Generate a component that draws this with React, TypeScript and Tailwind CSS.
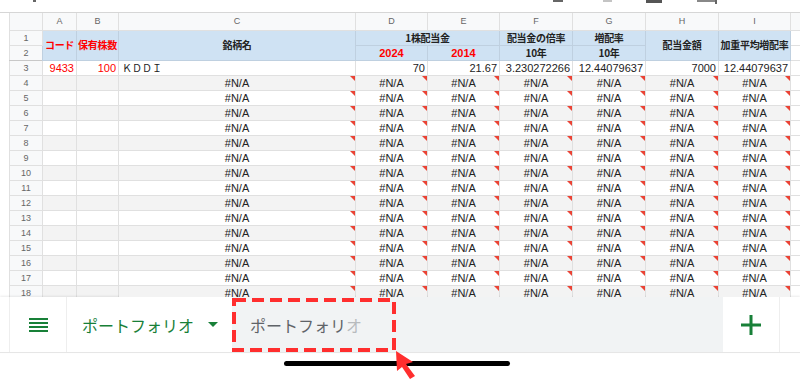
import React from "react";

const FONT = { fontFamily: '"Liberation Sans", Arial, "Noto Sans CJK JP", sans-serif' };
const JP = { fontFamily: '"Noto Sans CJK JP", "Liberation Sans", sans-serif' };

const colWidths = [33, 34, 42, 237, 72, 72, 73, 73, 73, 72, 10];
const letters = ["A", "B", "C", "D", "E", "F", "G", "H", "I", ""];

function Tri() {
  return (
    <span className="absolute right-0 top-0 w-0 h-0 border-l-[5px] border-l-transparent border-t-[5px] border-t-[#ea4335]" />
  );
}

function NaRow({ n }: { n: number }) {
  const gray = n % 2 === 0;
  const bg = gray ? "bg-[#f3f3f3]" : "bg-white";
  return (
    <tr className="h-[15px]">
      <td className="bg-[#f8f9fa] border border-[#e0e0e0] text-center text-[9px] text-[#666] p-0 leading-[14px]">{n}</td>
      <td className={`${bg} border border-[#e0e0e0] p-0`} />
      <td className={`${bg} border border-[#e0e0e0] p-0`} />
      {[0, 1, 2, 3, 4, 5, 6].map((i) => (
        <td key={i} className={`${bg} relative border border-[#e0e0e0] p-0 text-center text-[11px] leading-[14px] text-[#222]`}>
          #N/A
          <Tri />
        </td>
      ))}
      <td className="bg-white border border-[#e0e0e0] p-0" />
    </tr>
  );
}

export default function App() {
  const hdr = "bg-[#cfe2f3] border border-[#bfd0e0] p-0 text-center font-bold leading-[14px] whitespace-nowrap overflow-visible";
  const jp = "text-[10px] tracking-[-0.3px]";
  const red = "text-[#ff0000]";
  return (
    <div className="w-[800px] h-[385px] bg-white overflow-hidden relative" style={FONT}>
      {/* top strip with cut-off toolbar icons */}
      <div className="h-[12px] flex items-start">
        <span className="ml-[33px] w-[3px] h-[2px] bg-[#666]" />
        <span className="ml-[517px] w-[10px] h-[2px] bg-[#666]" />
        <span className="ml-[40px] w-[9px] h-[2px] bg-[#c4c4c4]" />
        <span className="ml-[34px] w-[16px] h-[3px] bg-[#555]" />
        <span className="ml-[35px] w-[18px] h-[2px] bg-[#888]" />
        <span className="w-[2px] h-[4px] bg-[#666]" />
      </div>

      {/* sheet */}
      <div className="h-[285px] overflow-hidden border-t border-[#d6d6d6] pl-[9px]">
        <table className="table-fixed border-collapse w-[791px]">
          <colgroup>
            {colWidths.map((w, i) => (
              <col key={i} style={{ width: w }} />
            ))}
          </colgroup>
          <tbody>
            <tr className="h-[17px]">
              <td className="bg-[#f8f9fa] border border-[#e0e0e0] border-t-0 p-0" />
              {letters.map((l, i) => (
                <td key={i} className="bg-[#f8f9fa] border border-[#e0e0e0] border-t-0 p-0 text-center text-[9px] text-[#666] leading-[16px]">
                  {l}
                </td>
              ))}
            </tr>
            <tr className="h-[15px]">
              <td className="bg-[#f8f9fa] border border-[#e0e0e0] text-center text-[9px] text-[#666] p-0 leading-[14px]">1</td>
              <td rowSpan={2} className={`${hdr} ${jp} ${red}`} style={JP}>コード</td>
              <td rowSpan={2} className={`${hdr} ${jp} ${red}`} style={JP}>保有株数</td>
              <td rowSpan={2} className={`${hdr} ${jp} text-[#222]`} style={JP}>銘柄名</td>
              <td colSpan={2} className={`${hdr} ${jp} text-[#222]`} style={JP}>1株配当金</td>
              <td className={`${hdr} ${jp} text-[#222]`} style={JP}>配当金の倍率</td>
              <td className={`${hdr} ${jp} text-[#222]`} style={JP}>増配率</td>
              <td rowSpan={2} className={`${hdr} ${jp} text-[#222]`} style={JP}>配当金額</td>
              <td rowSpan={2} className={`${hdr} ${jp} text-[#222]`} style={JP}>加重平均増配率</td>
              <td className="bg-white border border-[#e0e0e0] p-0" />
            </tr>
            <tr className="h-[15px]">
              <td className="bg-[#f8f9fa] border border-[#e0e0e0] border-b-[#c8c8c8] text-center text-[9px] text-[#666] p-0 leading-[14px]">2</td>
              <td className={`${hdr} text-[11px] ${red}`}>2024</td>
              <td className={`${hdr} text-[11px] ${red}`}>2014</td>
              <td className={`${hdr} ${jp} text-[#222]`} style={JP}>10年</td>
              <td className={`${hdr} ${jp} text-[#222]`} style={JP}>10年</td>
              <td className="bg-white border border-[#e0e0e0] p-0" />
            </tr>
            <tr className="h-[15px]">
              <td className="bg-[#f8f9fa] border border-[#e0e0e0] text-center text-[9px] text-[#666] p-0 leading-[14px]">3</td>
              <td className={`bg-white border border-[#e0e0e0] p-0 pr-[2px] text-right text-[11px] leading-[14px] ${red}`}>9433</td>
              <td className={`bg-white border border-[#e0e0e0] p-0 pr-[2px] text-right text-[11px] leading-[14px] ${red}`}>100</td>
              <td className="bg-white border border-[#e0e0e0] p-0 pl-[3px] text-left text-[10px] leading-[14px] text-[#222]" style={JP}>ＫＤＤＩ</td>
              <td className="bg-white border border-[#e0e0e0] p-0 pr-[2px] text-right text-[11px] leading-[14px] text-[#222]">70</td>
              <td className="bg-white border border-[#e0e0e0] p-0 pr-[2px] text-right text-[11px] leading-[14px] text-[#222]">21.67</td>
              <td className="bg-white border border-[#e0e0e0] p-0 pr-[2px] text-right text-[11px] leading-[14px] text-[#222]">3.230272266</td>
              <td className="bg-white border border-[#e0e0e0] p-0 pr-[2px] text-right text-[11px] leading-[14px] text-[#222]">12.44079637</td>
              <td className="bg-white border border-[#e0e0e0] p-0 pr-[2px] text-right text-[11px] leading-[14px] text-[#222]">7000</td>
              <td className="bg-white border border-[#e0e0e0] p-0 pr-[2px] text-right text-[11px] leading-[14px] text-[#222]">12.44079637</td>
              <td className="bg-white border border-[#e0e0e0] p-0" />
            </tr>
            {Array.from({ length: 15 }, (_, i) => (
              <NaRow key={i} n={i + 4} />
            ))}
          </tbody>
        </table>
      </div>

      {/* bottom sheet tab bar */}
      <div className="h-[56px] flex border-b border-[#e6e6e6] shadow-[0_-1px_2px_rgba(0,0,0,0.08)]">
        <div className="w-[9px] bg-white" />
        <div className="w-[58px] bg-white border-l border-r border-[#eeeeee] flex items-center justify-center">
          <svg width="19" height="14" viewBox="0 0 19 14">
            <rect x="0" y="0" width="19" height="2" fill="#188038" />
            <rect x="0" y="4" width="19" height="2" fill="#188038" />
            <rect x="0" y="8" width="19" height="2" fill="#188038" />
            <rect x="0" y="12" width="19" height="2" fill="#188038" />
          </svg>
        </div>
        <div className="w-[165px] bg-white flex items-center pl-[15px]">
          <span className="text-[16px] text-[#188038]" style={JP}>ポートフォリオ</span>
          <svg className="ml-[14px]" width="10" height="5" viewBox="0 0 10 5">
            <polygon points="0,0 10,0 5,5" fill="#188038" />
          </svg>
        </div>
        <div className="w-[491px] bg-[#f1f3f4] flex items-center pl-[18px]">
          <span className="text-[16px] text-[#5f6368]" style={JP}>
            ポートフォリ<span className="text-[#b8bbbe]">オ</span>
          </span>
        </div>
        <div className="w-[57px] bg-white border-r border-[#eeeeee] flex items-center justify-center">
          <svg width="20" height="20" viewBox="0 0 20 20">
            <rect x="8.5" y="0" width="3" height="20" fill="#188038" />
            <rect x="0" y="8.5" width="20" height="3" fill="#188038" />
          </svg>
        </div>
        <div className="flex-1 bg-white" />
      </div>

      {/* home indicator */}
      <div className="flex justify-start pl-[284px] pt-[8px]">
        <div className="w-[226px] h-[5px] rounded-full bg-black" />
      </div>

      {/* annotation: red dashed box */}
      <svg className="absolute left-[231px] top-[297px]" width="166" height="56" viewBox="0 0 166 56">
        <rect x="3" y="3" width="160" height="50" fill="none" stroke="#ff2e2e" strokeWidth="4" strokeDasharray="12 6" />
      </svg>
      {/* annotation: cursor arrow */}
      <svg className="absolute left-[394px] top-[349px]" width="26" height="32" viewBox="0 0 26 32">
        <polygon points="2,2 19,13 12,15 21,27 16,30 8,18 3,22" fill="#ff2e2e" />
      </svg>
    </div>
  );
}
